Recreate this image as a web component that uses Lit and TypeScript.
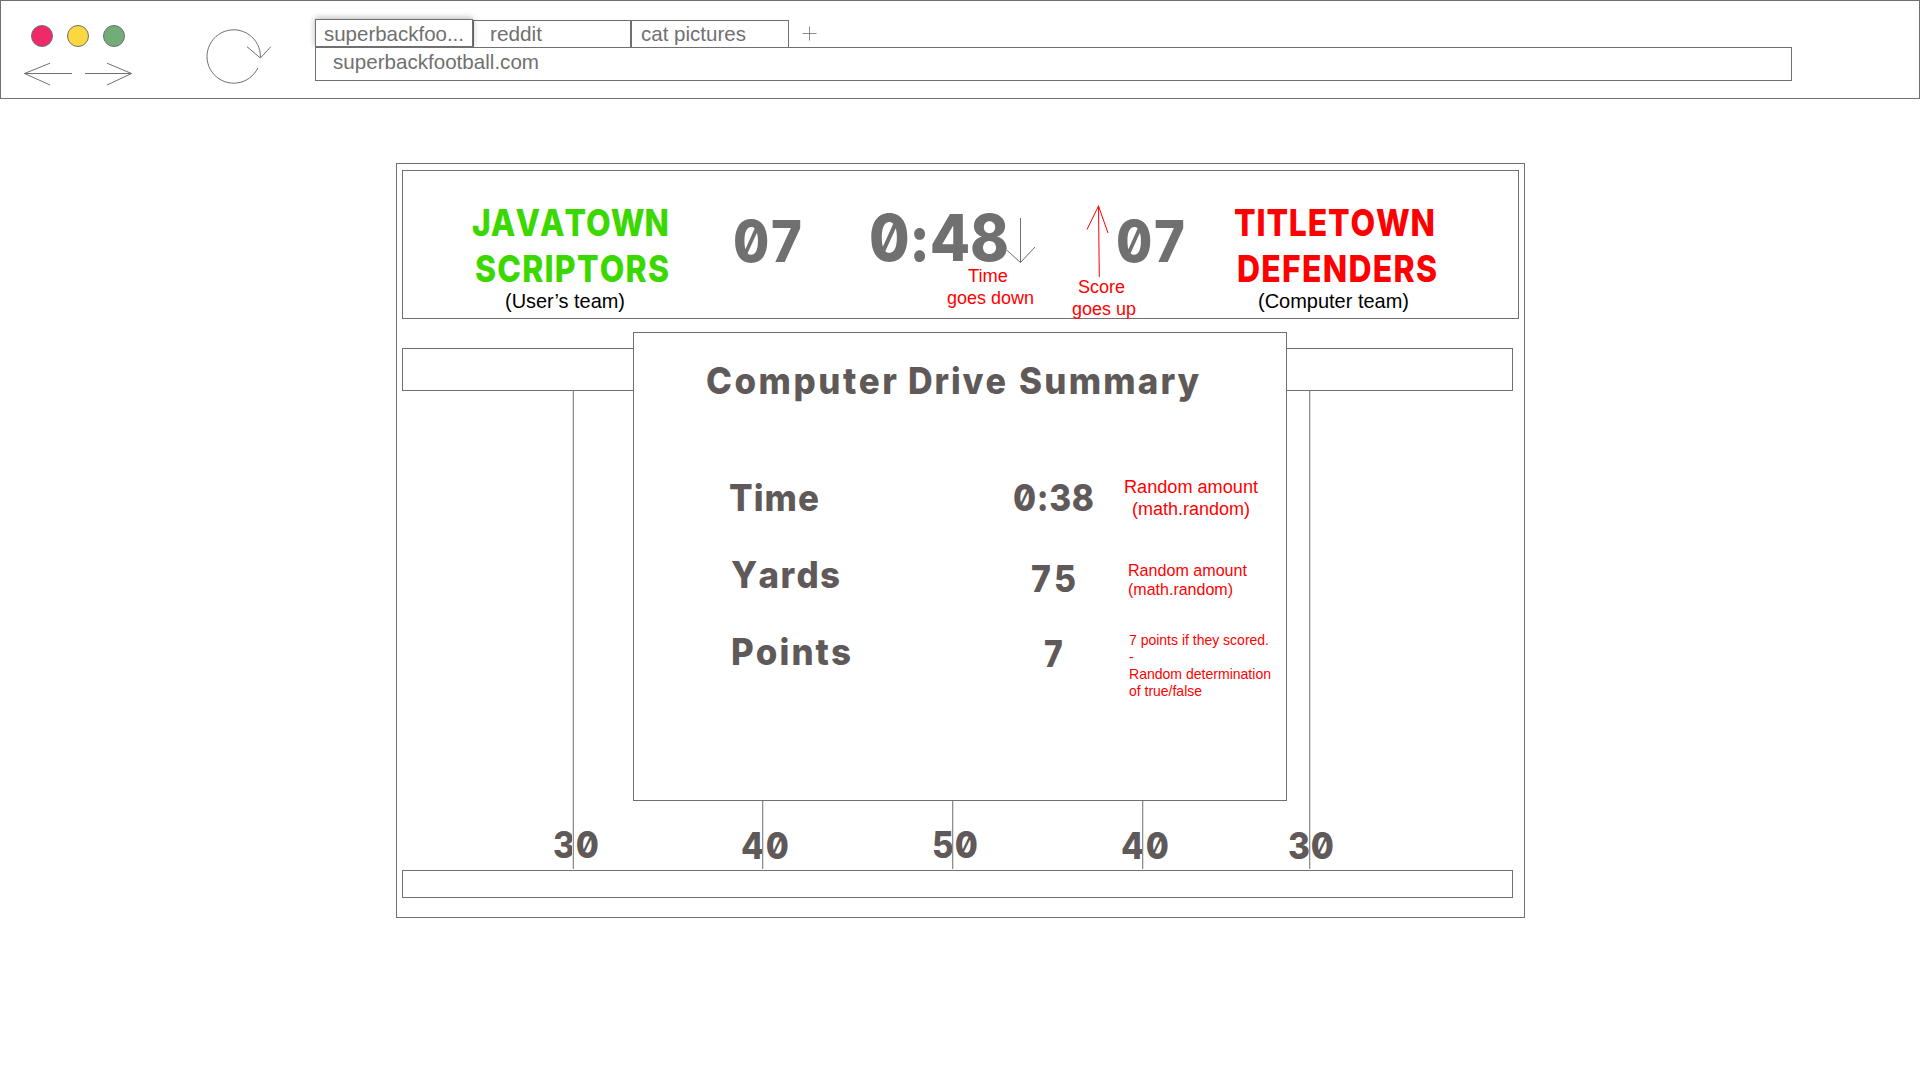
import { LitElement, html, css, svg, nothing } from "lit";
import { customElement } from "lit/decorators.js";

type Face = "pixel" | "plain";

/* One line of text whose box runs from cap height to baseline and is `width` wide. */
const line = (text: string, width: number, cap: number, face: Face = "plain", cls = "", squeeze = 0.86) => {
  const size = face === "pixel" ? cap / 0.727 : cap / 0.716;
  const k = face === "pixel" ? squeeze : 1;
  const single = text.length < 2;
  return html`<svg class="line ${face} ${cls}" width=${width} height=${cap}>
    ${svg`<text transform="translate(0 ${cap}) scale(${k} 1)" font-size=${size}
      textLength=${single ? nothing : width / k}
      lengthAdjust=${face === "pixel" ? "spacing" : "spacingAndGlyphs"}>${text}</text>`}
  </svg>`;
};

const shared = css`
  * { box-sizing: border-box; }
  svg { display: block; flex: none; overflow: visible; fill: none; }
  .line text { fill: currentColor; white-space: pre; }
  .plain text { font-family: "Liberation Sans", Arial, sans-serif; }
  .pixel text {
    font-family: Inter, "Open Sans", sans-serif;
    font-weight: 800;
    font-feature-settings: "zero" 1, "calt" 0;
    font-kerning: none;
  }
  .stroke { stroke: #707070; stroke-width: 1; }
`;

@customElement("browser-bar")
class BrowserBar extends LitElement {
  static styles = [shared, css`
    :host { display: block; color: #707070; }
    .bar { display: flex; height: 99px; border: 1px solid #707070; background: #fff; }
    .controls { width: 313px; flex: none; display: flex; }
    .left { width: 206px; padding: 24px 0 0 23px; }
    .dots { display: flex; gap: 14px; padding-left: 7px; height: 37px; }
    .dot { width: 22px; height: 22px; border: 1px solid #707070; border-radius: 50%; }
    .close { background: #ee2b68; }
    .min { background: #fcd840; }
    .max { background: #72ac77; }
    .reload { margin-top: 27px; }
    .nav { flex: none; width: 1477px; margin-left: 1px; padding-top: 18px; }
    .tabs { display: flex; align-items: flex-end; height: 28px; }
    .tab { width: 158px; height: 27px; border: 1px solid #707070; border-bottom: 0; padding: 5px 0 0 16px; }
    .tab.active { height: 28px; border-bottom: 1px solid #707070; padding: 6px 0 0 8px; box-shadow: 0 -1px 6px rgba(0, 0, 0, 0.3); clip-path: inset(-10px -10px 0 -10px); }
    .tab.third { padding-left: 9px; }
    .plus { align-self: flex-start; margin: 7px 0 0 13px; }
    .address { height: 34px; border: 1px solid #707070; padding: 6px 0 0 17px; background: #fff; }
  `];
  render() {
    return html`<div class="bar">
      <div class="controls">
        <div class="left">
          <div class="dots"><i class="dot close"></i><i class="dot min"></i><i class="dot max"></i></div>
          <svg class="stroke" width="110" height="24">
            <path d="M48 11.5H0.5M26 1.2L0.5 11.5L26 23M61 11.5H107.5M83 1.2L107.5 11.5L83 23" />
          </svg>
        </div>
        <svg class="stroke reload" width="66" height="56">
          <path d="M53.4 29A26.7 26.7 0 1 0 50.8 40M40 18.7L53.4 30L63.8 18.7" />
        </svg>
      </div>
      <div class="nav">
        <div class="tabs">
          <div class="tab active">${line("superbackfoo...", 140, 14.5)}</div>
          <div class="tab">${line("reddit", 52, 14.5)}</div>
          <div class="tab third">${line("cat pictures", 105, 14.5)}</div>
          <svg class="stroke plus" width="15" height="15"><path d="M0.5 7.5H14.5M7.5 0.5V14.5" stroke-opacity="0.8" /></svg>
        </div>
        <div class="address">${line("superbackfootball.com", 206, 14.5)}</div>
      </div>
    </div>`;
  }
}

@customElement("score-board")
class ScoreBoard extends LitElement {
  static styles = [shared, css`
    :host { display: block; }
    .board { position: relative; display: flex; align-items: flex-start; width: 1117px; height: 149px; border: 1px solid #707070; color: #707070; }
    .team { flex: none; display: flex; flex-direction: column; padding-top: 38px; }
    .home { width: 196px; margin-left: 69px; color: #3bd800; }
    .away { width: 202px; margin-left: 49px; color: #ff0000; }
    .second { margin: 19px 0 11px 3px; }
    .who { color: #000; }
    .home .who { margin-left: 33px; }
    .away .who { margin-left: 24px; }
    .score-a { margin: 49px 0 0 65px; }
    .clock { margin: 43px 0 0 67px; }
    .score-b { margin: 49px 0 0 107px; }
    .note { position: absolute; display: flex; flex-direction: column; gap: 9px; color: #ff0000; }
    .note-time { left: 544px; top: 98px; }
    .note-time :first-child { margin-left: 21px; }
    .note-score { left: 669px; top: 109px; }
    .note-score :first-child { margin-left: 6px; }
    .down { position: absolute; left: 603px; top: 46px; }
    .up { position: absolute; left: 683px; top: 34px; stroke: #ff0000; }
  `];
  render() {
    return html`<div class="board">
      <div class="team home">
        ${line("JAVATOWN", 197, 27, "pixel")}
        ${line("SCRIPTORS", 194, 27, "pixel", "second")}
        ${line("(User’s team)", 120, 14.5, "plain", "who")}
      </div>
      ${line("07", 69, 42, "pixel", "score-a", 0.91)}
      ${line("0:48", 140, 47, "pixel", "clock", 0.91)}
      ${line("07", 69, 42, "pixel", "score-b", 0.91)}
      <div class="team away">
        ${line("TITLETOWN", 201, 27, "pixel")}
        ${line("DEFENDERS", 200, 27, "pixel", "second")}
        ${line("(Computer team)", 151, 14.5, "plain", "who")}
      </div>
      <svg class="stroke down" width="32" height="48"><path d="M14.5 1V45.5M1 33.3L14.5 45.5L29 30" /></svg>
      <svg class="stroke up" width="24" height="74"><path d="M12.5 0.5L13.3 72M1 24.5L12.5 1L22 28" /></svg>
      <div class="note note-time">${line("Time", 40, 13)}${line("goes down", 87, 13)}</div>
      <div class="note note-score">${line("Score", 47, 13)}${line("goes up", 64, 13)}</div>
    </div>`;
  }
}

@customElement("drive-summary")
class DriveSummary extends LitElement {
  static styles = [shared, css`
    :host { display: block; color: #5f5a59; }
    .panel { width: 654px; height: 469px; border: 1px solid #707070; background: #fff; padding-top: 34px; }
    .title { display: flex; padding-left: 72px; }
    .drive { margin-left: 11px; }
    .summary { margin-left: 13px; }
    .rows { display: grid; grid-template-columns: 379px 80px 1fr; grid-auto-rows: 77px; padding-top: 90px; }
    .label { padding-left: 97px; }
    .label.first { padding-left: 95px; }
    .value { display: flex; justify-content: center; align-items: flex-start; }
    .value.mid { padding-top: 4px; }
    .value.low { padding: 2px 0 0 2px; }
    .note { display: flex; flex-direction: column; color: #ff0000; }
    .n1 { width: 134px; margin: -4px 0 0 31px; gap: 9px; align-items: center; }
    .n2 { margin: 2.5px 0 0 35px; gap: 7.5px; }
    .n3 { margin: -3px 0 0 36px; gap: 7px; }
  `];
  render() {
    return html`<div class="panel">
      <div class="title">
        ${line("Computer", 191, 27, "pixel", "", 0.94)}
        ${line("Drive", 98, 27, "pixel", "drive", 0.92)}
        ${line("Summary", 180, 27, "pixel", "summary", 0.94)}
      </div>
      <div class="rows">
        <div class="label first">${line("Time", 90, 27, "pixel", "", 0.94)}</div>
        <div class="value">${line("0:38", 81, 27, "pixel", "", 0.9)}</div>
        <div class="note n1">${line("Random amount", 134, 13)}${line("(math.random)", 118, 13)}</div>
        <div class="label">${line("Yards", 109, 27, "pixel", "", 0.94)}</div>
        <div class="value mid">${line("75", 45, 27, "pixel", "", 0.91)}</div>
        <div class="note n2">${line("Random amount", 119, 11.5)}${line("(math.random)", 105, 11.5)}</div>
        <div class="label">${line("Points", 120, 27, "pixel", "", 0.94)}</div>
        <div class="value low">${line("7", 20, 27, "pixel")}</div>
        <div class="note n3">
          ${line("7 points if they scored.", 140, 10)}
          ${line("-", 5, 10)}
          ${line("Random determination", 142, 10)}
          ${line("of true/false", 73, 10)}
        </div>
      </div>
    </div>`;
  }
}

@customElement("app-root")
class AppRoot extends LitElement {
  static styles = [shared, css`
    :host { display: block; width: 1920px; height: 1080px; background: #fff; overflow: hidden; }
    .frame { position: relative; width: 1129px; height: 755px; margin: 64px 0 0 396px; border: 1px solid #707070; padding: 6px 0 0 5px; }
    .sideline { width: 1111px; border: 1px solid #707070; }
    .top { height: 43px; margin-top: 29px; }
    .bottom { height: 28px; }
    .field { display: flex; height: 479px; width: 1111px; color: #5f5a59; }
    .yard { flex: none; width: 0; height: 478px; position: relative; }
    .yard::after { content: ""; position: absolute; left: 0; top: 0; width: 1px; height: 100%; background: #8f8f8f; box-shadow: 1px 0 #dcdcdc; }
    .yard svg { position: absolute; left: -21px; bottom: 10px; }
    .yard .raised { bottom: 11px; }
    .first { margin-left: 171px; }
    .first::after { box-shadow: -1px 0 #dcdcdc; }
    .first svg { left: -20px; }
    .second { margin-left: 189px; }
    .third, .fourth { margin-left: 190px; }
    .third svg { left: -20px; }
    .fifth { margin-left: 167px; }
    .modal { position: absolute; left: 236px; top: 168px; }
  `];
  render() {
    const yards: [string, string, string, number][] = [
      ["30", "first", "raised", 46], ["40", "second", "", 48], ["50", "third", "raised", 46], ["40", "fourth", "", 48], ["30", "fifth", "", 46],
    ];
    return html`<browser-bar></browser-bar>
      <div class="frame">
        <score-board></score-board>
        <div class="sideline top"></div>
        <div class="field">
          ${yards.map(([n, place, lift, w]) => html`<div class="yard ${place}">${line(n, w, 27, "pixel", lift, 0.9)}</div>`)}
        </div>
        <div class="sideline bottom"></div>
        <drive-summary class="modal"></drive-summary>
      </div>`;
  }
}
